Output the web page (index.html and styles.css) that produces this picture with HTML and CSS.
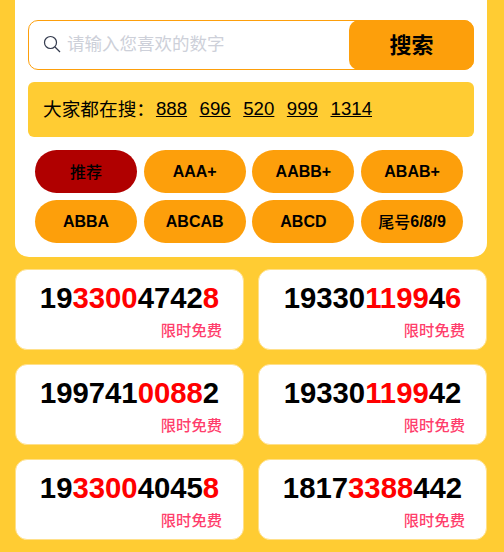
FILE: index.html
```html
<!DOCTYPE html>
<html lang="zh-CN">
<head>
  <meta charset="UTF-8">
  <meta name="viewport" content="width=device-width, initial-scale=1">
  <title>靓号搜索</title>
  <link rel="stylesheet" href="styles.css">
</head>
<body>

<section class="search-panel">
  <div class="search-box">
    <svg class="search-icon" viewBox="0 0 18 18" width="18" height="18" fill="none">
      <circle cx="7.5" cy="7.5" r="6" stroke="#333a4d" stroke-width="1.2"/>
      <path d="M12 12l5 5" stroke="#333a4d" stroke-width="1.2"/>
    </svg>
    <span class="search-placeholder">请输入您喜欢的数字</span>
    <button class="search-button">搜索</button>
  </div>

  <div class="hot-bar">
    <span class="hot-label">大家都在搜：</span>
    <a class="hot-link">888</a>
    <a class="hot-link">696</a>
    <a class="hot-link">520</a>
    <a class="hot-link">999</a>
    <a class="hot-link">1314</a>
  </div>

  <div class="tag-grid">
    <div class="tag tag-active"><span class="cjk">推荐</span></div>
    <div class="tag">AAA+</div>
    <div class="tag">AABB+</div>
    <div class="tag">ABAB+</div>
    <div class="tag">ABBA</div>
    <div class="tag">ABCAB</div>
    <div class="tag">ABCD</div>
    <div class="tag"><span class="cjk">尾号</span>6/8/9</div>
  </div>
</section>

<section class="number-list">
  <div class="number-card">
    <div class="number">19<em>3300</em>4742<em>8</em></div>
    <div class="price">限时免费</div>
  </div>
  <div class="number-card">
    <div class="number">19330<em>1199</em>4<em>6</em></div>
    <div class="price">限时免费</div>
  </div>
  <div class="number-card">
    <div class="number">199741<em>0088</em>2</div>
    <div class="price">限时免费</div>
  </div>
  <div class="number-card">
    <div class="number">19330<em>1199</em>42</div>
    <div class="price">限时免费</div>
  </div>
  <div class="number-card">
    <div class="number">19<em>3300</em>4045<em>8</em></div>
    <div class="price">限时免费</div>
  </div>
  <div class="number-card">
    <div class="number">1817<em>3388</em>442</div>
    <div class="price">限时免费</div>
  </div>
</section>

</body>
</html>
```

FILE: styles.css
```css
html, body {
  height: 552px;
  overflow: hidden;
}

body {
  margin: 0;
  padding: 0 17px 0 15px;
  background: #ffcc33;
  font-family: "Liberation Sans", "Noto Sans CJK SC", sans-serif;
  color: #000;
}

.search-panel {
  margin-top: -20px;
  padding: 40px 13px 14px;
  background: #fff;
  border-radius: 14px;
}

.search-box {
  display: flex;
  align-items: center;
  height: 50px;
  box-sizing: border-box;
  border: 1px solid #fd9f0b;
  border-radius: 10px;
}

.search-icon {
  margin: 0 0 2px 14px;
  flex-shrink: 0;
}

.search-placeholder {
  margin-left: 6px;
  padding-bottom: 5px;
  flex: 1;
  font-size: 17.5px;
  color: #cdd0d9;
}

.search-button {
  width: 125px;
  height: 50px;
  margin: -1px;
  padding: 0 0 5px;
  border: none;
  border-radius: 10px;
  background: #fd9f0b;
  color: #000;
  font-family: inherit;
  font-size: 22px;
  font-weight: bold;
}

.hot-bar {
  display: flex;
  align-items: center;
  gap: 12.5px;
  height: 55px;
  box-sizing: border-box;
  margin-top: 12px;
  padding: 0 0 2px 15px;
  background: #ffcc33;
  border-radius: 6px;
  font-size: 18.67px;
}

.hot-label {
  margin-right: -11.5px;
  padding-bottom: 2px;
}

.hot-link {
  text-decoration: underline;
}

.tag-grid {
  display: grid;
  grid-template-columns: repeat(4, 102px);
  gap: 7px 6.7px;
  margin-top: 13px;
  padding: 0 7px;
}

.tag {
  display: flex;
  align-items: center;
  justify-content: center;
  height: 43px;
  background: #fd9f0b;
  border-radius: 22px;
  font-size: 16px;
  font-weight: bold;
}

.tag .cjk {
  font-weight: 500;
  padding-bottom: 2px;
}

.tag-active {
  background: #b00000;
}

.number-list {
  display: grid;
  grid-template-columns: 229px 229px;
  gap: 14px;
  margin-top: 12px;
}

.number-card {
  height: 81px;
  box-sizing: border-box;
  padding-top: 10px;
  background: #fff;
  border: 1px solid #ffe08a;
  border-radius: 12px;
}

.number {
  text-align: center;
  font-size: 29.3px;
  font-weight: bold;
  line-height: 35px;
}

.number em {
  color: #ff0000;
  font-style: normal;
}

.price {
  margin-top: 6px;
  padding-right: 21px;
  text-align: right;
  font-size: 15.3px;
  font-weight: 500;
  line-height: 20px;
  color: #ff3d6b;
}
```
